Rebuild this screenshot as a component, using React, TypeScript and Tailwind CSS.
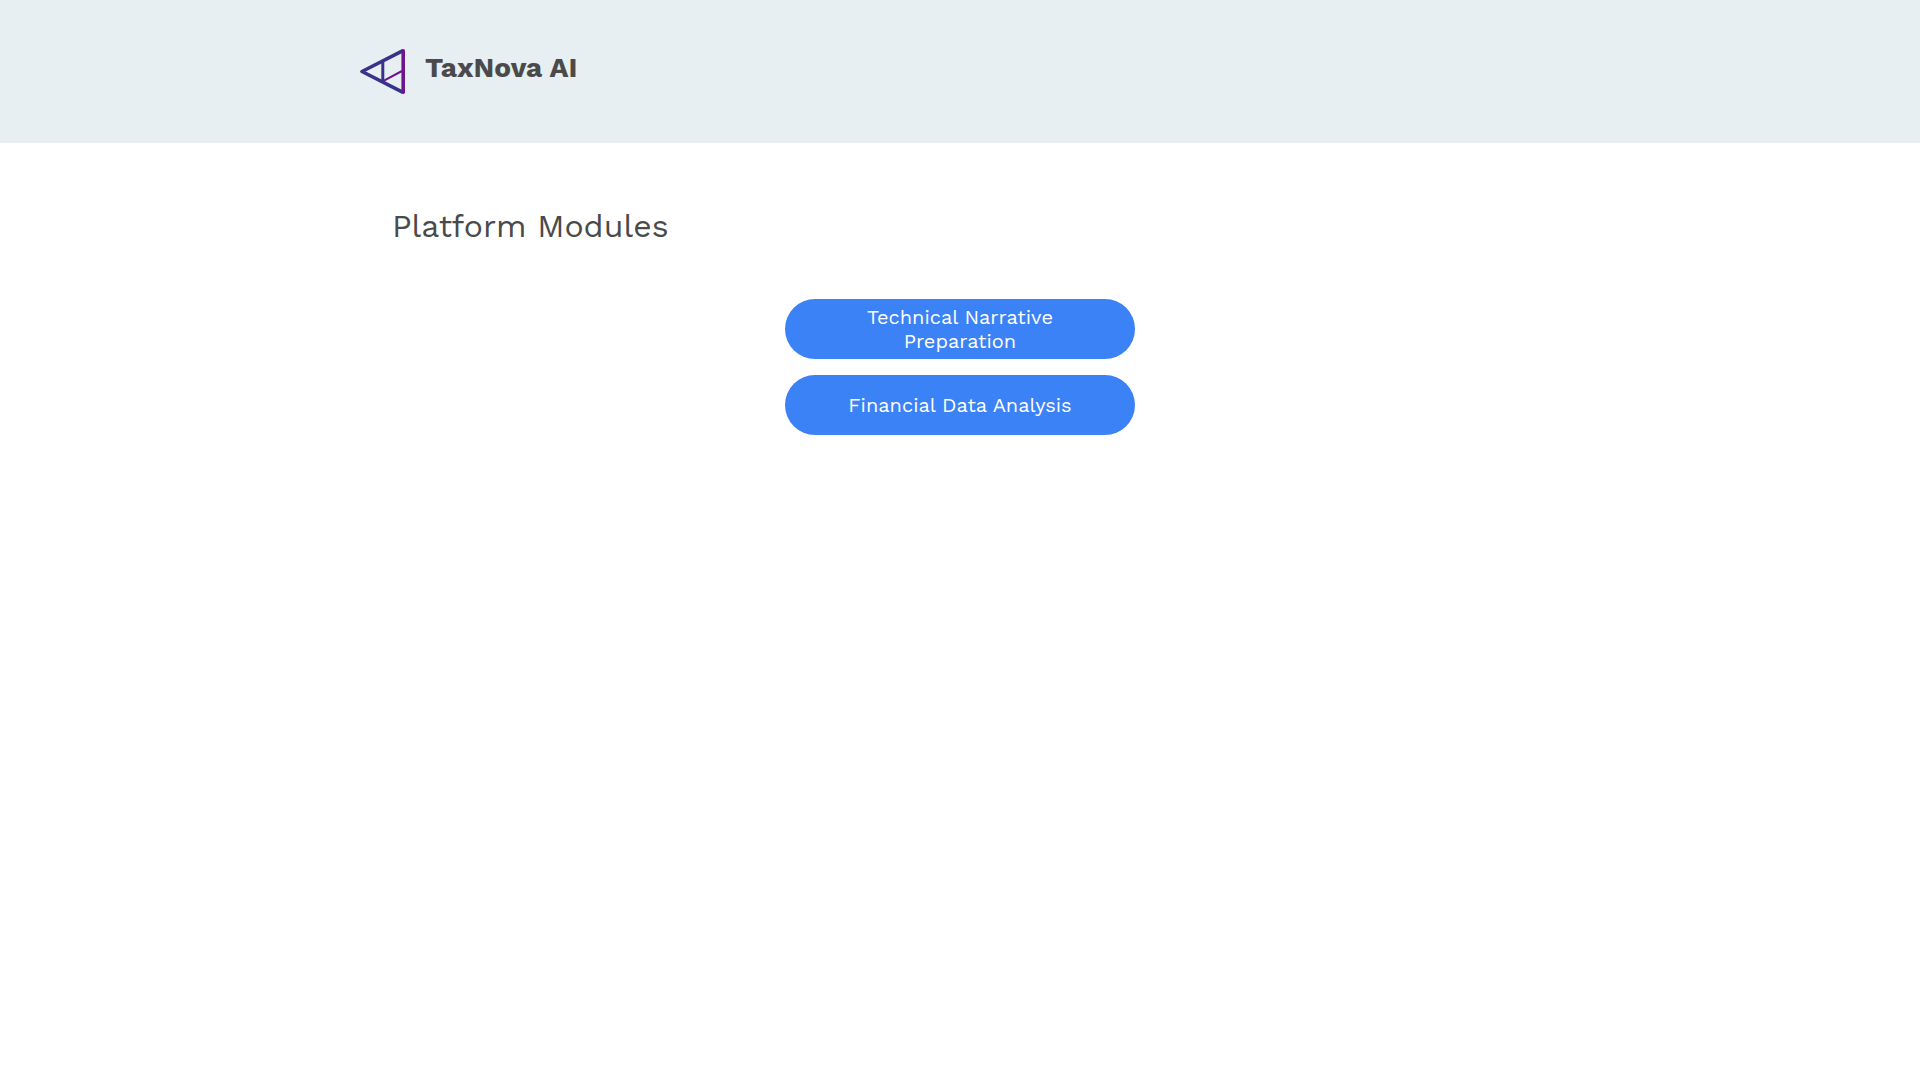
import type { ReactNode } from "react";

const modules = ["Technical Narrative Preparation", "Financial Data Analysis"];

function Logo() {
  return (
    <svg viewBox="0 0 45 47" className="h-[47px] w-[45px] shrink-0" fill="none" aria-hidden="true">
      <path d="M43 2.7 L2 23.5 L43 44.3" stroke="#37328a" strokeWidth="3.6" strokeLinejoin="round" />
      <path d="M22.8 13 V33.5" stroke="#37328a" strokeWidth="3" />
      <path d="M24 32.7 L42 23" stroke="#6d158c" strokeWidth="2" />
      <path d="M43.2 2.7 V44.3" stroke="#6d158c" strokeWidth="3.6" strokeLinecap="round" />
    </svg>
  );
}

function ModuleButton({ children }: { children: ReactNode }) {
  return (
    <button
      type="button"
      className="h-[60px] w-[350px] max-w-full rounded-full bg-[#3b82f6] px-12 text-xl/6 text-white hover:bg-[#2563eb]"
    >
      {children}
    </button>
  );
}

export default function App() {
  return (
    <div className="min-h-screen bg-white font-['Work_Sans','Inter',sans-serif] text-[#4a4a4a]">
      <header className="bg-[#e7eff2] py-12">
        <div className="mx-auto flex max-w-[1200px] gap-5">
          <Logo />
          <span className="pt-1 text-[28px]/8 font-bold">TaxNova AI</span>
        </div>
      </header>

      <main className="mx-auto max-w-[1200px] px-8 pt-16">
        <h1 className="text-[32px]/[38px]">Platform Modules</h1>
        <div className="mt-[54px] flex flex-col items-center gap-4">
          {modules.map((name) => (
            <ModuleButton key={name}>{name}</ModuleButton>
          ))}
        </div>
      </main>
    </div>
  );
}
